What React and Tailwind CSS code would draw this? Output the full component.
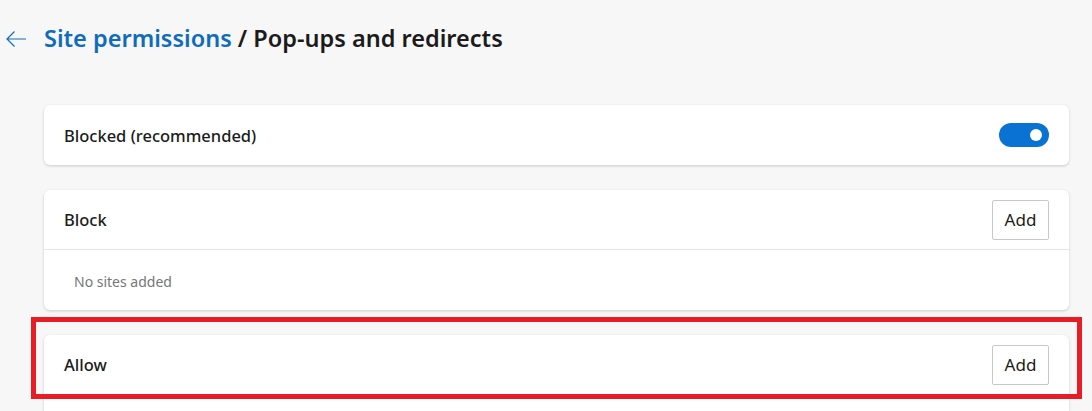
import React from 'react';

const font = { fontFamily: '"Noto Sans", "Open Sans", sans-serif' };

const AddButton = () => (
    <button className="h-[40px] w-[57px] border border-[#c8c8c8] bg-white rounded-[2px] text-[17px] text-[#1b1b1b]">
        Add
    </button>
);

const Card = ({ children, className = '' }) => (
    <div className={`bg-white rounded-[6px] shadow-[0_1px_3px_rgba(0,0,0,0.18)] ${className}`}>{children}</div>
);

const Label = ({ children }) => (
    <span className="text-[16.5px] font-[500] text-[#1b1b1b] pt-[2px]">{children}</span>
);

const App = () => {
    return (
        <div className="h-[411px] overflow-hidden bg-[#f7f7f7] pr-[23px]" style={font}>
            <div className="flex items-center h-[78px]">
                <div className="w-[44px] flex items-center pl-[5px]">
                    <svg width="22" height="18" viewBox="0 0 22 18" fill="none" stroke="#0f6cbd" strokeWidth="1.2">
                        <path d="M21 9H2M9.5 1.5L2 9l7.5 7.5" />
                    </svg>
                </div>
                <h1 className="text-[23.5px] font-semibold text-[#1b1b1b]">
                    <a href="#" className="text-[#0f6cbd]">Site permissions</a> / Pop-ups and redirects
                </h1>
            </div>

            <div className="pl-[44px] pt-[27px] flex flex-col gap-[25px]">
                <Card className="h-[60px] flex items-center justify-between px-[20px]">
                    <Label>Blocked (recommended)</Label>
                    <span className="relative w-[50px] h-[24px] rounded-full bg-[#0a72d2]">
                        <span className="absolute right-[7px] top-[6px] w-[12px] h-[12px] rounded-full bg-white" />
                    </span>
                </Card>

                <Card>
                    <div className="h-[60px] flex items-center justify-between px-[20px] border-b border-[#e5e5e5]">
                        <Label>Block</Label>
                        <AddButton />
                    </div>
                    <div className="h-[60px] flex items-center px-[30px] pt-[3px] text-[14px] text-[#767676]">No sites added</div>
                </Card>

                <div className="relative">
                    <Card>
                        <div className="h-[60px] flex items-center justify-between px-[20px] border-b border-[#e5e5e5]">
                            <Label>Allow</Label>
                            <AddButton />
                        </div>
                        <div className="h-[60px]" />
                    </Card>
                    <div className="absolute left-[-13px] right-[-13px] top-[-18px] h-[82px] border-[5px] border-[#e81c24] pointer-events-none" />
                </div>
            </div>
        </div>
    );
};

export default App;
